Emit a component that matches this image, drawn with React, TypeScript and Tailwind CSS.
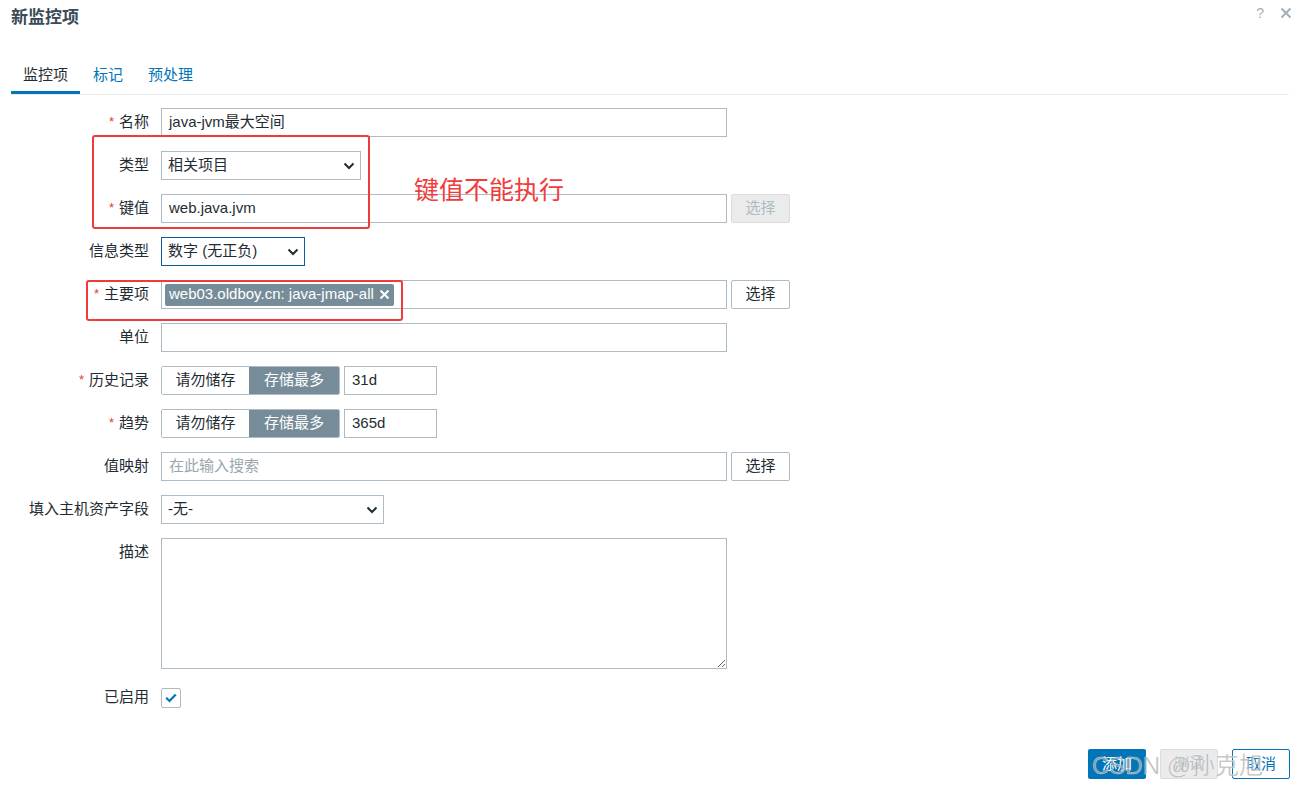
import React from "react";

const FONT = { fontFamily: '"Liberation Sans", Arial, "Noto Sans CJK SC", sans-serif' };

function Chevron() {
  return (
    <svg width="12" height="8" viewBox="0 0 12 8" className="shrink-0">
      <path d="M1.5 1.5 L6 6 L10.5 1.5" fill="none" stroke="#1f2c33" strokeWidth="2" />
    </svg>
  );
}

function Label({ text, req }: { text: string; req?: boolean }) {
  return (
    <div className="w-[149px] shrink-0 flex justify-end items-center h-[29px] text-[15px] text-[#1f2c33]">
      {req && <span className="text-[#e33734] mr-[5px] text-[13px] -mt-[2px]">*</span>}
      {text}
    </div>
  );
}

function Row({ label, req, children, top = false }: { label: string; req?: boolean; children: React.ReactNode; top?: boolean }) {
  return (
    <div className={`flex gap-[12px] ${top ? "items-start" : "items-center"}`}>
      <Label text={label} req={req} />
      {children}
    </div>
  );
}

function Input({ w, value, placeholder }: { w: string; value?: string; placeholder?: string }) {
  return (
    <div className={`${w} h-[29px] border border-[#acbbc4] bg-white flex items-center px-[7px] text-[15px] text-[#1f2c33]`}>
      {value ? value : <span className="text-[#9aa6ad]">{placeholder}</span>}
    </div>
  );
}

function Select({ w, value, focus }: { w: string; value: string; focus?: boolean }) {
  return (
    <div className={`${w} h-[29px] border ${focus ? "border-[#0b5e9a]" : "border-[#acbbc4]"} bg-white flex items-center justify-between pl-[6px] pr-[5px] text-[15px] text-[#1f2c33]`}>
      <span>{value}</span>
      <Chevron />
    </div>
  );
}

function PickBtn({ disabled }: { disabled?: boolean }) {
  return (
    <div
      className={`w-[59px] h-[29px] rounded-[2px] border flex items-center justify-center text-[15px] ${
        disabled ? "bg-[#ebebeb] border-[#dcdcdc] text-[#acbbc4]" : "bg-white border-[#acbbc4] text-[#1f2c33]"
      }`}
    >
      选择
    </div>
  );
}

function Seg({ v }: { v: string }) {
  return (
    <div className="flex items-center gap-[4px]">
      <div className="flex h-[29px] border border-[#acbbc4] rounded-[2px] overflow-hidden text-[15px]">
        <div className="w-[87px] flex items-center justify-center bg-white text-[#1f2c33]">请勿储存</div>
        <div className="w-[90px] flex items-center justify-center bg-[#768d99] text-white">存储最多</div>
      </div>
      <Input w="w-[93px]" value={v} />
    </div>
  );
}

export default function App() {
  return (
    <div className="relative w-[1300px] h-[790px] bg-white overflow-hidden" style={FONT}>
      {/* header */}
      <div className="flex items-start justify-between pl-[11px] pr-[8px] pt-[7px] h-[53px]">
        <div className="text-[17px] font-bold text-[#3b4a55] leading-[22px]">新监控项</div>
        <div className="flex items-center gap-[16px] text-[#a4afb6] text-[14px] leading-[14px] -mt-[1px]">
          <span>?</span>
          <svg width="12" height="12" viewBox="0 0 12 12">
            <path d="M1.5 1.5 L10.5 10.5 M10.5 1.5 L1.5 10.5" stroke="#a4afb6" strokeWidth="2" />
          </svg>
        </div>
      </div>

      {/* tabs */}
      <div className="mx-[11px] border-b border-[#ebeef0] flex h-[42px] items-end text-[15px]">
        <div className="px-[12px] h-[32px] flex items-start pt-[2px] text-[#1f2c33] border-b-[3px] border-[#0275b8]">监控项</div>
        <div className="px-[13px] h-[32px] flex items-start pt-[2px] text-[#0275b8]">标记</div>
        <div className="px-[12px] h-[32px] flex items-start pt-[2px] text-[#0275b8]">预处理</div>
      </div>

      {/* form */}
      <div className="flex flex-col gap-[14px] mt-[13px]">
        <Row label="名称" req>
          <Input w="w-[566px]" value="java-jvm最大空间" />
        </Row>
        <Row label="类型">
          <Select w="w-[200px]" value="相关项目" />
        </Row>
        <Row label="键值" req>
          <div className="flex items-center gap-[4px]">
            <Input w="w-[566px]" value="web.java.jvm" />
            <PickBtn disabled />
          </div>
        </Row>
        <Row label="信息类型">
          <Select w="w-[144px]" value="数字 (无正负)" focus />
        </Row>
        <Row label="主要项" req>
          <div className="flex items-center gap-[4px]">
            <div className="w-[566px] h-[29px] border border-[#acbbc4] bg-white flex items-center px-[3px]">
              <div className="h-[22px] bg-[#768d99] rounded-[2px] text-white text-[15px] flex items-center pl-[4px] pr-[4px] gap-[5px]">
                <span>web03.oldboy.cn: java-jmap-all</span>
                <svg width="11" height="11" viewBox="0 0 11 11">
                  <path d="M1.5 1.5 L9.5 9.5 M9.5 1.5 L1.5 9.5" stroke="white" strokeWidth="2" />
                </svg>
              </div>
            </div>
            <PickBtn />
          </div>
        </Row>
        <Row label="单位">
          <Input w="w-[566px]" value="" />
        </Row>
        <Row label="历史记录" req>
          <Seg v="31d" />
        </Row>
        <Row label="趋势" req>
          <Seg v="365d" />
        </Row>
        <Row label="值映射">
          <div className="flex items-center gap-[4px]">
            <Input w="w-[566px]" placeholder="在此输入搜索" />
            <PickBtn />
          </div>
        </Row>
        <Row label="填入主机资产字段">
          <Select w="w-[223px]" value="-无-" />
        </Row>
        <Row label="描述" top>
          <textarea
            readOnly
            className="w-[566px] h-[131px] border border-[#acbbc4] bg-white outline-none resize block"
          />
        </Row>
        <Row label="已启用">
          <div className="w-[20px] h-[20px] border border-[#acbbc4] rounded-[2px] bg-white flex items-center justify-center">
            <svg width="12" height="10" viewBox="0 0 12 10">
              <path d="M1.2 4.8 L4.5 8 L10.8 1.5" fill="none" stroke="#0275b8" strokeWidth="2.2" />
            </svg>
          </div>
        </Row>
      </div>

      {/* footer buttons */}
      <div className="absolute right-[10px] top-[749px] flex gap-[14px] text-[15px]">
        <div className="w-[58px] h-[30px] rounded-[2px] bg-[#0275b8] text-white flex items-center justify-center">添加</div>
        <div className="w-[58px] h-[30px] rounded-[2px] bg-[#ebebeb] border border-[#dcdcdc] text-[#acbbc4] flex items-center justify-center">测试</div>
        <div className="w-[58px] h-[30px] rounded-[2px] bg-white border border-[#0275b8] text-[#0275b8] flex items-center justify-center">取消</div>
      </div>

      {/* annotations */}
      <div className="absolute left-[92px] top-[135px] w-[278px] h-[94px] border-2 border-[#ee3b3b] rounded-[3px]" />
      <div className="absolute left-[86px] top-[280px] w-[317px] h-[41px] border-2 border-[#ee3b3b] rounded-[3px]" />
      <div className="absolute left-[414px] top-[175px] text-[25px] text-[#f03c3c] leading-[30px]">键值不能执行</div>

      {/* watermark */}
      <div
        className="absolute left-[1092px] top-[751px] text-[24px] leading-[30px] text-[rgba(170,170,170,0.75)]"
        style={{ WebkitTextStroke: "0.5px rgba(255,255,255,0.6)" }}
      >
        CSDN @孙克旭
      </div>
    </div>
  );
}
